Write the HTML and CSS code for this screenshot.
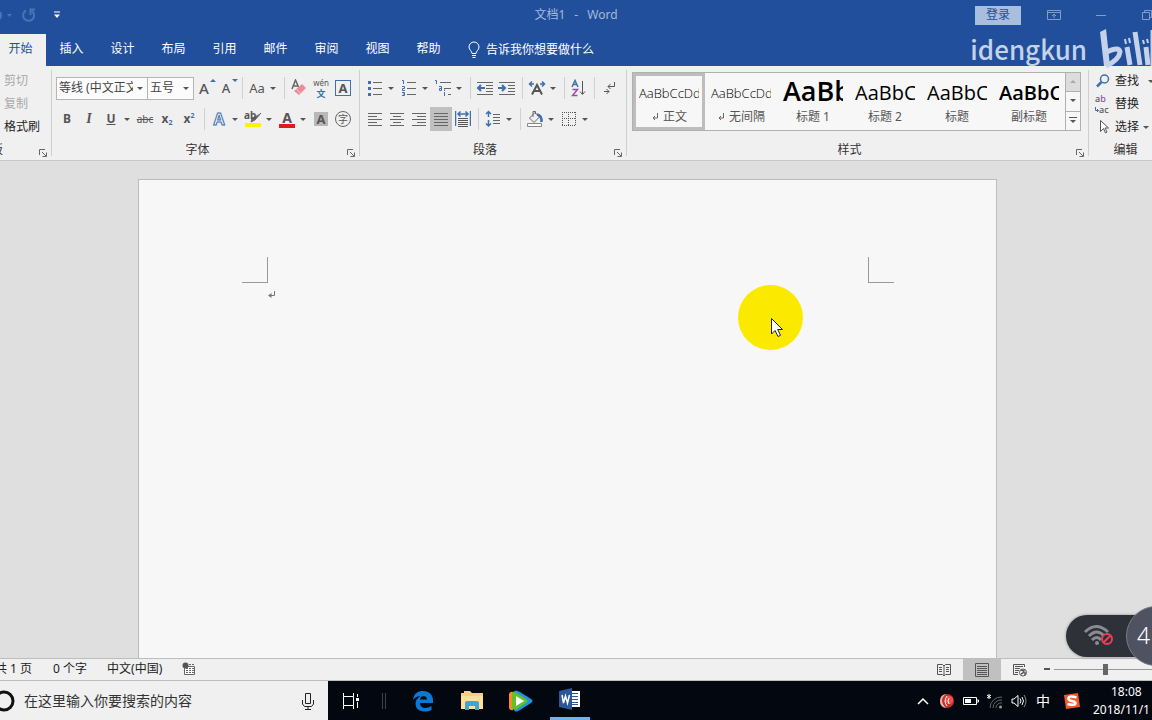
FILE: index.html
```html
<!DOCTYPE html>
<html lang="zh-CN">
<head>
<meta charset="utf-8">
<title>文档1 - Word</title>
<link rel="stylesheet" href="styles.css">
</head>
<body>
<div class="app">
  <header class="titlebar">
    <div class="quick">
      <button class="bare" aria-label="撤消"><svg width="14" height="16" viewBox="0 0 14 16"><path d="M0 5q2 3 0 7" fill="none" stroke="#4a74b8" stroke-width="2"/><path d="M7 7h5l-2.500 3z" fill="#4a74b8"/></svg></button>
      <button class="bare redo" aria-label="重复"><svg width="16" height="16" viewBox="0 0 16 16"><path d="M5 3.500A5.500 5.500 0 1 0 11 4M14 2.500H9.500V8" fill="none" stroke="#4a74b8" stroke-width="2"/></svg></button>
      <button class="bare more" aria-label="自定义快速访问工具栏"><svg width="8" height="8" viewBox="0 0 8 8"><path d="M1 1h6" stroke="#fff"/><path d="M1 3.500h6L4 7z" fill="#fff"/></svg></button>
    </div>
    <h1 class="title"><span>文档1</span><span>-</span><span>Word</span></h1>
    <div class="window-tools">
      <button class="login">登录</button>
      <button class="bare" aria-label="功能区显示选项"><svg width="14" height="12" viewBox="0 0 14 12" fill="none" stroke="#7f9dcd"><path d="M.5 1.500h13v9H.5zM.5 3.500h13M7 9V5M5 7l2-2 2 2"/></svg></button>
      <button class="bare" aria-label="最小化"><svg width="12" height="12" viewBox="0 0 12 12"><path d="M1 6.500h10" stroke="#7f9dcd"/></svg></button>
      <button class="bare" aria-label="向下还原"><svg width="12" height="12" viewBox="0 0 12 12" fill="none" stroke="#7f9dcd"><path d="M1.500 3.500h7v7h-7zM3.500 3.500v-2h7v7h-2"/></svg></button>
    </div>
  </header>

  <nav class="tabs">
    <button class="tab active">开始</button><button class="tab">插入</button><button class="tab">设计</button><button class="tab">布局</button><button class="tab">引用</button><button class="tab">邮件</button><button class="tab">审阅</button><button class="tab">视图</button><button class="tab">帮助</button>
    <button class="tell"><svg width="12" height="18" viewBox="0 0 12 18" fill="none" stroke="#fff"><path d="M4 12.500C4 10 1 9 1 6a5 5 0 0 1 10 0c0 3-3 4-3 6.500zM4 14.500h4M4.500 16.500h3"/></svg>告诉我你想要做什么</button>
  </nav>

  <section class="ribbon">
    <div class="group clipboard">
      <button class="line off">剪切</button>
      <button class="line off">复制</button>
      <button class="line">格式刷</button>
      <div class="caption"><span class="clip-name">剪贴板</span><button class="launcher" aria-label="剪贴板选项"><svg width="8" height="8" viewBox="0 0 8 8"><path d="M.5 6V.5H6M3 3l4 4M7.500 3.500v4h-4" fill="none" stroke="#666"/></svg></button></div>
    </div>

    <div class="group font">
      <div class="row">
        <label class="combo family"><select aria-label="字体"><option>等线 (中文正文)</option></select></label>
        <label class="combo size"><select aria-label="字号"><option>五号</option></select></label>
        <button class="tool" aria-label="增大字号"><span class="letter big">A</span><svg class="mark" width="6" height="16" viewBox="0 0 6 16"><path d="M0 4l3-3 3 3z" fill="#3f6fae"/></svg></button>
        <button class="tool" aria-label="减小字号"><span class="letter">A</span><svg class="mark" width="6" height="16" viewBox="0 0 6 16"><path d="M0 1h6L3 4z" fill="#3f6fae"/></svg></button>
        <i class="sep"></i>
        <button class="tool aa">Aa</button><button class="drop" aria-label="更改大小写"></button>
        <i class="sep"></i>
        <button class="tool" aria-label="清除所有格式"><svg width="18" height="18" viewBox="0 0 18 18"><path d="M2 10L5.500 1l3 7M3.500 7h4" fill="none" stroke="#666" stroke-width="1.500"/><path d="M4 12l8-7 4 4-7 7z" fill="#ea8b98"/><path d="M6.500 10l4.500 5" stroke="#f7c5cb"/></svg></button>
        <button class="tool pinyin" aria-label="拼音指南"><span>wén</span><b>文</b></button>
        <button class="tool" aria-label="字符边框"><span class="boxed">A</span></button>
      </div>
      <div class="row">
        <button class="tool strong">B</button>
        <button class="tool italic">I</button>
        <button class="tool under">U</button><button class="drop" aria-label="下划线样式"></button>
        <button class="tool strike">abc</button>
        <button class="tool script">x<sub>2</sub></button>
        <button class="tool script">x<sup>2</sup></button>
        <i class="sep"></i>
        <button class="tool"><span class="effect">A</span></button><button class="drop" aria-label="文本效果"></button>
        <button class="tool hilite"><span>ab</span><svg width="18" height="18" viewBox="0 0 18 18"><path d="M17 3l-6 7-4 2 1-4" fill="#666" stroke="#666"/><path d="M1 13h16v4H1z" fill="#fff200"/></svg></button><button class="drop" aria-label="突出显示颜色"></button>
        <button class="tool"><span class="color">A</span></button><button class="drop" aria-label="字体颜色"></button>
        <button class="tool"><span class="shade">A</span></button>
        <button class="tool"><span class="ring">字</span></button>
      </div>
      <div class="caption">字体<button class="launcher" aria-label="字体选项"><svg width="8" height="8" viewBox="0 0 8 8"><path d="M.5 6V.5H6M3 3l4 4M7.500 3.500v4h-4" fill="none" stroke="#666"/></svg></button></div>
    </div>

    <div class="group paragraph">
      <div class="row">
        <button class="tool" aria-label="项目符号"><svg width="16" height="16" viewBox="0 0 16 16"><path d="M6 2.500h9M6 8.500h9M6 14.500h9" stroke="#666"/><path d="M1 1h3v3H1zM1 7h3v3H1zM1 13h3v3H1z" fill="#3f6fae"/></svg></button><button class="drop" aria-label="项目符号库"></button>
        <button class="tool" aria-label="编号"><svg width="16" height="16" viewBox="0 0 16 16"><path d="M6 2.500h9M6 8.500h9M6 14.500h9" stroke="#666"/><path d="M1 .5h1.500V4M1 6.500h2.500v2H1.500v2H4M1 12.500h2.500v3H1M2 14h1" fill="none" stroke="#3f6fae"/></svg></button><button class="drop" aria-label="编号库"></button>
        <button class="tool" aria-label="多级列表"><svg width="18" height="16" viewBox="0 0 18 16"><path d="M6 2.500h11M10 8.500h7M14 14.500h3" stroke="#666"/><path d="M1 .5h1.500V4M5 6.500h2.500v4H5.500v-2h2M10.500 12v4M10.500 9.500V11" fill="none" stroke="#3f6fae"/></svg></button><button class="drop" aria-label="多级列表库"></button>
        <i class="sep"></i>
        <button class="tool" aria-label="减少缩进量"><svg width="18" height="16" viewBox="0 0 18 16"><path d="M1 2.500h16M10 5.500h7M10 8.500h7M10 11.500h7M1 14.500h16" stroke="#666"/><path d="M9 8H2M5 5L2 8l3 3" fill="none" stroke="#3f6fae" stroke-width="2"/></svg></button>
        <button class="tool" aria-label="增加缩进量"><svg width="18" height="16" viewBox="0 0 18 16"><path d="M1 2.500h16M10 5.500h7M10 8.500h7M10 11.500h7M1 14.500h16" stroke="#666"/><path d="M0 8h7M4 5l3 3-3 3" fill="none" stroke="#3f6fae" stroke-width="2"/></svg></button>
        <i class="sep"></i>
        <button class="tool" aria-label="中文版式"><svg width="18" height="16" viewBox="0 0 18 16" fill="none"><path d="M4 14.500L9 5l5 9.500M6 11h6" stroke="#555" stroke-width="2"/><path d="M6 4H2M4 1.500L1.500 4 4 6.500M12 4h4M14 1.500L16.500 4 14 6.500" stroke="#3f6fae" stroke-width="1.500"/></svg></button><button class="drop" aria-label="中文版式选项"></button>
        <i class="sep"></i>
        <button class="tool" aria-label="排序"><svg width="16" height="18" viewBox="0 0 16 18" fill="none"><path d="M1 8l3-6.500L7 8M2 5.500h4" stroke="#3f6fae" stroke-width="1.500"/><path d="M1.500 10.500h5l-5 6h5" stroke="#9550a0" stroke-width="1.500"/><path d="M11.500 2v13M9 12.500l2.500 3 2.500-3" stroke="#555"/></svg></button>
        <i class="sep"></i>
        <button class="tool" aria-label="显示编辑标记"><svg width="14" height="14" viewBox="0 0 14 14" fill="none" stroke="#555"><path d="M12.500 1v4.500H6M8.500 3L6 5.500 8.500 8M2 10.500h5M4.500 8L7 10.500 4.500 13"/></svg></button>
      </div>
      <div class="row">
        <button class="tool" aria-label="左对齐"><svg width="16" height="14" viewBox="0 0 16 14"><path d="M1 1.500h14M1 4.500h9M1 7.500h14M1 10.500h9M1 13.500h14" stroke="#666"/></svg></button>
        <button class="tool" aria-label="居中"><svg width="16" height="14" viewBox="0 0 16 14"><path d="M1 1.500h14M4 4.500h8M1 7.500h14M4 10.500h8M1 13.500h14" stroke="#666"/></svg></button>
        <button class="tool" aria-label="右对齐"><svg width="16" height="14" viewBox="0 0 16 14"><path d="M1 1.500h14M6 4.500h9M1 7.500h14M6 10.500h9M1 13.500h14" stroke="#666"/></svg></button>
        <button class="tool pressed" aria-label="两端对齐"><svg width="16" height="14" viewBox="0 0 16 14"><path d="M1 1.500h14M1 4.500h14M1 7.500h14M1 10.500h14M1 13.500h14" stroke="#666"/></svg></button>
        <button class="tool" aria-label="分散对齐"><svg width="16" height="18" viewBox="0 0 16 18" fill="none"><path d="M.5 1v15M15.500 1v15M3 4h10M5.500 1.500L3 4l2.500 2.500M10.500 1.500L13 4l-2.500 2.500" stroke="#3f6fae" stroke-width="1.500"/><path d="M3 8.500h10M3 10.500h10M3 12.500h10M3 14.500h10M3 16.500h10" stroke="#555"/></svg></button>
        <i class="sep"></i>
        <button class="tool" aria-label="行和段落间距"><svg width="16" height="18" viewBox="0 0 16 18" fill="none"><path d="M3.500 1.500v5.500M3.500 10v6M1 4l2.500-2.500L6 4M1 13.500L3.500 16 6 13.500" stroke="#3f6fae" stroke-width="1.500"/><path d="M8 4.500h7M8 7.500h7M8 10.500h7M8 13.500h7" stroke="#666"/></svg></button><button class="drop" aria-label="间距选项"></button>
        <i class="sep"></i>
        <button class="tool" aria-label="底纹"><svg width="18" height="18" viewBox="0 0 18 18" fill="none"><path d="M3.500 8l5.500-5.500L13.500 7 8 12.500zM7 7V1.500h2.500V4" stroke="#666"/><path d="M11 4.500q5 1 4.500 7.500" stroke="#3f6fae" stroke-width="2.500"/><path d="M1.500 13.500h14v3h-14z" stroke="#888" fill="#fff"/></svg></button><button class="drop" aria-label="底纹颜色"></button>
        <button class="tool" aria-label="边框"><svg width="14" height="14" viewBox="0 0 14 14"><path d="M0 .5h14M0 6.500h14M0 13.500h14M.5 0v14M6.500 0v14M13.500 0v14" fill="none" stroke="#555" stroke-dasharray="1 1"/></svg></button><button class="drop" aria-label="边框选项"></button>
      </div>
      <div class="caption">段落<button class="launcher" aria-label="段落设置"><svg width="8" height="8" viewBox="0 0 8 8"><path d="M.5 6V.5H6M3 3l4 4M7.500 3.500v4h-4" fill="none" stroke="#666"/></svg></button></div>
    </div>

    <div class="group styles">
      <div class="gallery">
        <button class="style selected"><span class="sample">AaBbCcDd</span><span class="name"><svg width="8" height="9" viewBox="0 0 8 9"><path d="M6.500 0v5H2M4 3L2 5l2 2" fill="none" stroke="#666"/></svg> 正文</span></button>
        <button class="style"><span class="sample">AaBbCcDd</span><span class="name"><svg width="8" height="9" viewBox="0 0 8 9"><path d="M6.500 0v5H2M4 3L2 5l2 2" fill="none" stroke="#666"/></svg> 无间隔</span></button>
        <button class="style"><span class="sample h1">AaBb</span><span class="name">标题 1</span></button>
        <button class="style"><span class="sample h2">AaBbC</span><span class="name">标题 2</span></button>
        <button class="style"><span class="sample h2">AaBbC</span><span class="name">标题</span></button>
        <button class="style"><span class="sample sub">AaBbC</span><span class="name">副标题</span></button>
        <div class="scroller">
          <button class="dim" aria-label="上一行"><svg width="6" height="6" viewBox="0 0 6 6"><path d="M0 4l3-3 3 3z" fill="#aaa"/></svg></button>
          <button aria-label="下一行"><svg width="6" height="6" viewBox="0 0 6 6"><path d="M0 1h6L3 4z" fill="#555"/></svg></button>
          <button aria-label="其他"><svg width="8" height="8" viewBox="0 0 8 8"><path d="M0 .5h8" stroke="#555"/><path d="M1 3h6L4 6z" fill="#555"/></svg></button>
        </div>
      </div>
      <div class="caption">样式<button class="launcher" aria-label="样式窗格"><svg width="8" height="8" viewBox="0 0 8 8"><path d="M.5 6V.5H6M3 3l4 4M7.500 3.500v4h-4" fill="none" stroke="#666"/></svg></button></div>
    </div>

    <div class="group editing">
      <button class="line find"><svg width="16" height="16" viewBox="0 0 16 16" fill="none" stroke="#3f6fae"><circle cx="9.500" cy="6" r="4" stroke-width="1.500"/><path d="M6.500 9L2 13.500" stroke-width="2.500"/></svg>查找<i class="caret"></i></button>
      <button class="line"><span class="swap"><b>a<em>b</em></b><b class="to"><svg width="4" height="5" viewBox="0 0 4 5"><path d="M.5 0v3.500H4M2.500 2v3" fill="none" stroke="#3f6fae"/></svg>ac</b></span>替换</button>
      <button class="line"><svg width="16" height="16" viewBox="0 0 16 16" fill="#fff" stroke="#555"><path d="M5.500 1.500v11l3-3 2 4.500 1.500-1-2-4h3.500z"/></svg>选择<i class="caret"></i></button>
      <div class="caption">编辑</div>
    </div>
  </section>

  <main class="workspace">
    <article class="page">
      <div class="margins"><i class="corner left"></i><i class="corner right"></i></div>
      <p class="paragraph-line"><svg width="8" height="9" viewBox="0 0 8 9"><path d="M6.500 0v4.500H1" fill="none" stroke="#777"/><path d="M0 4.500L3.500 2v5z" fill="#777"/></svg></p>
    </article>
    <div class="spotlight"><svg width="14" height="21" viewBox="0 0 14 21"><path d="M1.500 1.500v15.500l3.500-3.500 3 6 2.500-1.200-2.800-5.800h4.800z" fill="#fff" stroke="#222"/></svg></div>
  </main>

  <footer class="status">
    <span class="pages">共 1 页</span>
    <span class="words">0 个字</span>
    <span class="lang">中文(中国)</span>
    <svg width="14" height="14" viewBox="0 0 14 14"><path d="M2.500 4.500h10v8h-10z" fill="#fff" stroke="#666"/><path d="M7 2.500h6M4 6.500h8M4 8.500h8M4 10.500h8" stroke="#666" stroke-dasharray="2 1"/><circle cx="3.500" cy="3.500" r="3" fill="#555"/></svg>
    <div class="views">
      <button aria-label="阅读视图"><svg width="14" height="14" viewBox="0 0 14 14" fill="none" stroke="#555"><path d="M.5 1.500h5L7 3l1.500-1.500h5v10h-5L7 13l-1.500-1.500h-5zM7 3v10M2 4.500h3M2 6.500h3M2 8.500h3M9 4.500h3M9 6.500h3M9 8.500h3"/></svg></button>
      <button class="current" aria-label="页面视图"><svg width="14" height="14" viewBox="0 0 14 14" fill="none" stroke="#555"><path d="M.5.5h13v13H.5zM2 3.500h10M2 5.500h10M2 7.500h10M2 9.500h10M2 11.500h10"/></svg></button>
      <button aria-label="Web 版式"><svg width="14" height="14" viewBox="0 0 14 14" fill="none" stroke="#555"><path d="M11.500 4V1.500H.5v10H5M2 3.500h8M2 5.500h5M2 7.500h4M2 9.500h3"/><circle cx="10" cy="9.500" r="3.500" fill="#fff"/><path d="M8 7l3 1-1 2-2 1M12 9v3" stroke-width="1.500"/></svg></button>
    </div>
    <button class="minus" aria-label="缩小"><svg width="6" height="2"><path d="M0 1h6" stroke="#555" stroke-width="2"/></svg></button>
    <input class="zoom" type="range" aria-label="显示比例" min="0" max="100" value="50">
  </footer>

  <footer class="taskbar">
    <label class="search">
      <svg width="16" height="24" viewBox="0 0 16 24"><circle cx="4" cy="12" r="9" fill="none" stroke="#111" stroke-width="3"/></svg>
      <input type="text" aria-label="搜索" placeholder="在这里输入你要搜索的内容">
      <svg width="12" height="18" viewBox="0 0 12 18" fill="none" stroke="#222"><path d="M3.500 1.500h5v10h-5zM.5 8v4l2 2.500h7l2-2.500V8M6 14.500v3M3 17.500h6"/></svg>
    </label>
    <div class="launch">
      <button class="view" aria-label="任务视图"><svg width="18" height="16" viewBox="0 0 18 16" fill="none" stroke="#fff"><path d="M1.500 0v3.500h10V0M1.500 16v-3.500h10V16M1.500 3.500v9M11.500 3.500v9M15.500 1v3M15.500 9v6"/><path d="M14 5h3v3h-3z" fill="#fff" stroke="none"/></svg></button>
      <svg class="grip" width="6" height="18" viewBox="0 0 6 18"><path d="M1.500 1v16M4.500 1v16" stroke="#3d4148"/></svg>
      <button aria-label="Edge"><svg width="22" height="22" viewBox="0 0 22 22"><path d="M1 10C2 3 6 1 11 1c6 0 10 4 10 9v3H8c0 6 7 6 11.500 3v4C13 23 4 22 3.500 14 3.500 10 6 7.500 9 6 5 6 2.500 8 1 10zM8 9.500h7C15 5 9 4.500 8 9.500z" fill="#0a78d7"/></svg></button>
      <button aria-label="文件资源管理器"><svg width="22" height="20" viewBox="0 0 22 20"><path d="M0 2h3V0h6l2 2h11v16H0z" fill="#f5d27a"/><path d="M0 5h22v13H0z" fill="#fde09a"/><path d="M4 19v-7q0-2 2-2h10q2 0 2 2v7h-4v-4H8v4z" fill="#3aa6dd"/></svg></button>
      <button aria-label="播放器"><svg width="24" height="22" viewBox="0 0 24 22"><path d="M0 4q1-3 4-2v18q-3 1-4-2z" fill="#ff8a1c"/><path d="M5 2q1-3 6 0l11 7q3 2 0 4l-11 7q-5 3-6 0z" fill="#1e93e4"/><path d="M3 3q1-3 5 0l9 6q3 2 0 4l-9 6q-4 2-5-1z" fill="#62c02a"/><path d="M7 6l8 5-8 5z" fill="#fff"/></svg></button>
      <button class="running" aria-label="Word"><svg width="22" height="22" viewBox="0 0 22 22"><path d="M11 3h10v16H11z" fill="#fff"/><path d="M12 5.500h7M12 8.500h7M12 11.500h7M12 14.500h7M12 16.500h7" stroke="#2b579a"/><path d="M0 3l13-3v22L0 19z" fill="#2b579a"/><path d="M3 7l1.500 8L6.500 8l2 7L10.500 7" fill="none" stroke="#fff" stroke-width="1.500"/></svg></button>
    </div>
    <div class="tray">
      <button aria-label="显示隐藏的图标"><svg width="12" height="8" viewBox="0 0 12 8"><path d="M1 7l5-5 5 5" fill="none" stroke="#fff" stroke-width="1.500"/></svg></button>
      <button aria-label="录制"><svg width="16" height="16" viewBox="0 0 16 16"><circle cx="8" cy="8" r="7" fill="#c9302c"/><path d="M7 1q-8 6 0 14-6-1-6-7t6-7z" fill="#e9b3a8"/><circle cx="10" cy="7" r="4" fill="#f0504a"/><path d="M8 3q-4 5 0 10M10 5q-2 3 0 6" fill="none" stroke="#fff"/></svg></button>
      <button aria-label="电池"><svg width="16" height="10" viewBox="0 0 16 10"><path d="M.5 1.500h13v7H.5zM14 4h1.500v2H14" fill="none" stroke="#fff"/><path d="M2 3h6v4H2z" fill="#fff"/></svg></button>
      <button aria-label="网络"><svg width="18" height="16" viewBox="0 0 18 16" fill="none"><path d="M3 1v5M1 2l4 3M5 2L1 5" stroke="#fff"/><path d="M4 15A11 11 0 0 1 16 4M7 15a8 8 0 0 1 9-8M10 15a5 5 0 0 1 6-5" stroke="#666"/><circle cx="14.500" cy="14" r="1.500" fill="#999"/></svg></button>
      <button aria-label="音量"><svg width="16" height="14" viewBox="0 0 16 14" fill="none" stroke="#fff"><path d="M1 5h2l4-3.500v11L3 9H1zM9 4.500q2 2.500 0 5M11 3q3 4 0 8"/><path d="M13 1q4 6 0 12" stroke="#888"/></svg></button>
      <button class="ime">中</button>
      <button class="wide" aria-label="搜狗输入法"><svg width="16" height="16" viewBox="0 0 16 16"><path d="M0 2l14-2 2 14-14 2z" fill="#f15a24"/><path d="M12.500 4.500Q4 2 4.500 6q.5 1.500 3.500 2t3.500 2q0 3-8 1" fill="none" stroke="#fff" stroke-width="2.500"/></svg></button>
      <time class="clock"><span class="hour">18:08</span><span>2018/11/1</span></time>
    </div>
  </footer>

  <div class="watermark"><span>idengkun</span><svg width="52" height="42" viewBox="0 0 52 42" fill="none" stroke="#c4d2ea"><path d="M0 4l6-3 4 37H4z" fill="#c4d2ea" stroke="none"/><path d="M7 24q12-6 13 0-1 8-14 14" stroke-width="5"/><path d="M27 19l3 18M35 4l5 33M46 19l2 18" stroke-width="5"/><path d="M25 11l1 5M29 10l1 5M43 12l1 4M47 11l1 4" stroke-width="2"/><path d="M53 2v36" stroke-width="5"/></svg></div>
  <div class="monitor">
    <svg width="32" height="24" viewBox="0 0 32 24" fill="none"><path d="M2 8q11-11 23 0M6 12q8-8 15 0M9 16q5-5 9 0" stroke="#8a8c91" stroke-width="3"/><circle cx="14" cy="19" r="2" fill="#8a8c91"/><circle cx="24" cy="15" r="5" fill="#2f3138" stroke="#e8405a" stroke-width="2"/><path d="M20.500 18.500l7-7" stroke="#e8405a" stroke-width="2"/></svg>
    <span class="meter">4</span>
  </div>
</div>
</body>
</html>
```

FILE: styles.css
```css
* { box-sizing: border-box; }
body {
  margin: 0;
  overflow: hidden;
  font: 12px/16px "Noto Sans", "Noto Sans CJK SC", sans-serif;
  color: #222;
}
button, input, select { font: inherit; color: inherit; }
button { border: 0; padding: 0; background: none; white-space: nowrap; }
svg { display: block; flex: none; }
.app { position: relative; display: flex; flex-direction: column; height: 100vh; overflow: hidden; }

/* title bar */
.titlebar {
  display: grid;
  grid-template-columns: 1fr auto 1fr;
  align-items: center;
  height: 34px;
  padding-bottom: 4px;
  background: #224f9c;
}
.quick { display: flex; align-items: center; }
.redo { margin-left: 7px; }
.more { margin-left: 16px; }
.title { display: flex; gap: 9px; margin: 0; font-size: 12px; font-weight: 400; color: #a5b9dc; }
.window-tools { display: flex; align-items: center; justify-content: flex-end; overflow: hidden; margin-right: -1px; }
.login { width: 46px; height: 19px; margin-right: 26px; background: #a9bddd; color: #224f9c; }
.window-tools .bare + .bare { margin-left: 34px; }

/* tabs */
.tabs { display: flex; height: 32px; margin-left: -5px; background: #224f9c; }
.tab { width: 51px; height: 32px; padding-bottom: 3px; color: #fff; }
.tab.active { background: #f0f0f0; color: #224f9c; }
.tell { display: flex; align-items: center; gap: 6px; margin-left: 14px; padding-bottom: 1px; color: #fff; }

/* ribbon */
.ribbon { display: flex; flex: none; height: 95px; padding: 4px 0; background: #f0f0f0; border-bottom: 1px solid #c8c8c8; }
.group { display: flex; flex-direction: column; flex: none; padding-left: 4px; border-right: 1px solid #cfcfcf; }
.clipboard { width: 52px; }
.font { width: 308px; padding-top: 6px; }
.paragraph { width: 267px; padding-top: 6px; }
.styles { flex: 1; padding-top: 2px; }
.editing { width: 63px; border: 0; padding-left: 6px; }
.row { display: flex; height: 24px; margin-bottom: 7px; align-items: center; }
.line { display: flex; align-items: center; gap: 4px; height: 22px; flex: none; }
.line + .line { margin-top: 1px; }
.off { color: #aaa; }
.caption { position: relative; display: flex; flex: none; justify-content: center; height: 16px; margin-top: auto; margin-bottom: -2px; padding-right: 20px; color: #333; }
.clipboard .caption { justify-content: flex-start; }
.clip-name { display: flex; justify-content: flex-end; width: 7px; margin-left: -4px; padding-right: 4px; overflow: hidden; white-space: nowrap; }
.editing .caption { padding-right: 0; padding-left: 4px; }
.launcher { position: absolute; right: 4px; bottom: 1px; }

.tool { display: flex; align-items: center; justify-content: center; position: relative; width: 22px; height: 24px; flex: none; color: #555; }
.drop { width: 12px; height: 24px; flex: none; padding-left: 2px; }
.drop::before, .caret, .combo::after {
  content: "";
  display: block;
  width: 0;
  height: 0;
  border: 3px solid transparent;
  border-top-color: #555;
  border-bottom: 0;
}
.sep { width: 8px; height: 22px; flex: none; background: linear-gradient(#d0d0d0, #d0d0d0) center / 1px 100% no-repeat; }
.pressed { background: #c0c0c0; }

.combo { display: flex; align-items: center; height: 23px; border: 1px solid #b5b5b5; background: #fcfcfc; }
.combo select { flex: 1; width: 0; height: 20px; border: 0; padding: 0 0 0 2px; background: none; appearance: none; overflow: hidden; text-overflow: clip; color: #444; }
.combo::after { margin: 0 4px; }
.family { width: 92px; margin-right: -1px; }
.size { width: 47px; }

.letter { font-size: 13px; font-weight: 500; padding-right: 2px; }
.letter.big { font-size: 15px; }
.mark { position: absolute; right: 0; top: 2px; }
.aa { font-size: 13px; }
.pinyin { flex-direction: column; font-size: 8px; line-height: 10px; }
.pinyin b { font-size: 9px; color: #2f75a8; line-height: 11px; }
.boxed { width: 16px; height: 16px; border: 1px solid #3f6fae; font-weight: 700; font-size: 13px; line-height: 14px; }
.strong { font-weight: 700; }
.italic { font: italic 700 14px/16px "Liberation Serif", serif; }
.under { font-weight: 700; text-decoration: underline; }
.strike { font-size: 10px; text-decoration: line-through; }
.script { font-weight: 700; }
.script sub, .script sup { font-size: 7px; line-height: 7px; color: #3f6fae; }
.script sub { align-self: flex-end; margin-bottom: 5px; }
.script sup { align-self: flex-start; margin-top: 5px; }
.effect { font-size: 16px; font-weight: 700; color: #f0f5fc; -webkit-text-stroke: 1px #3f6fae; }
.hilite span { position: absolute; left: 2px; top: 2px; font-size: 10px; font-weight: 700; line-height: 12px; }
.color { width: 16px; border-bottom: 4px solid #e01b1b; font-size: 14px; font-weight: 700; line-height: 13px; }
.shade { width: 14px; background: #b8b8b8; font-size: 13px; font-weight: 700; line-height: 14px; }
.ring { width: 16px; height: 16px; border: 1px solid #666; border-radius: 50%; font-size: 10px; line-height: 14px; }

/* style gallery */
.gallery { display: flex; height: 59px; margin: 0 7px 0 1px; border: 1px solid #b0b0b0; background: #f7f7f7; }
.style { display: flex; flex-direction: column; width: 72px; padding: 4px 6px; border: 0; color: #555; }
.style.selected { padding: 1px 3px; border: 3px solid #bdbdbd; }
.sample { width: 60px; height: 32px; overflow: hidden; font: 300 13px/32px "Open Sans", sans-serif; text-align: left; color: #000; }
.sample.h1 { font-size: 27px; font-weight: 600; line-height: 28px; }
.sample.h2 { font-size: 20px; font-weight: 400; }
.sample.sub { font-size: 20px; font-weight: 600; }
.name { display: flex; align-items: center; justify-content: center; gap: 4px; width: 60px; }
.scroller { display: flex; flex-direction: column; flex: 1; border-left: 1px solid #b0b0b0; }
.scroller button { display: flex; align-items: center; justify-content: center; flex: 1; border-top: 1px solid #b0b0b0; }
.scroller .dim { border-top: 0; background: #dcdcdc; }
.caret { flex: none; }
.find .caret { margin-left: 5px; }
.swap { display: flex; flex-direction: column; width: 16px; font-size: 9px; line-height: 11px; text-align: left; color: #555; }
.swap b { font-weight: 500; }
.swap .to { display: flex; align-items: center; }
.swap em { font-style: normal; color: #9550a0; }

/* document */
.workspace { position: relative; flex: 1; min-height: 0; padding: 18px 155px 0 138px; background: #dfdfdf; overflow: hidden; }
.page { height: 100%; padding: 77px 102px 0 103px; background: #f7f7f7; border: 1px solid #bcbcbc; border-bottom: 0; }
.margins { display: flex; justify-content: space-between; }
.corner { width: 26px; height: 26px; border-bottom: 1px solid #999; }
.corner.left { border-right: 1px solid #999; }
.corner.right { border-left: 1px solid #999; }
.paragraph-line { margin: 8px 0 0 26px; }
.spotlight { position: absolute; left: 738px; top: 124px; display: grid; width: 65px; height: 65px; border-radius: 50%; background: #fce900; }
.spotlight svg { margin: 32px 0 0 32px; }

/* status bar */
.status { display: flex; align-items: center; flex: none; height: 23px; padding-bottom: 1px; background: #f0f0f0; border-top: 1px solid #bdbdbd; border-bottom: 1px solid #bdbdbd; overflow: hidden; white-space: nowrap; }
.pages { margin-left: -5px; }
.words { margin-left: 21px; }
.lang { margin: 0 20px 0 20px; }
.views { display: flex; align-self: stretch; margin: 0 0 -1px auto; }
.views button { display: flex; align-items: center; justify-content: center; width: 38px; }
.current { background: #c0c0c0; }
.minus { margin: 0 4px 0 5px; }
.zoom { appearance: none; flex: none; width: 102px; height: 16px; margin: 0 -4px 0 0; background: linear-gradient(#999, #999) center / 100% 1px no-repeat; }
.zoom::-webkit-slider-thumb { appearance: none; width: 5px; height: 11px; background: #666; }

/* taskbar */
.taskbar { display: flex; flex: none; height: 39px; background: #030710; color: #fff; }
.search { display: flex; align-items: center; width: 328px; padding-right: 14px; background: #f0f0f0; color: #222; }
.search input { flex: 1; min-width: 0; padding: 0 0 0 8px; border: 0; background: none; font-size: 14px; }
.search input::placeholder { color: #333; }
.launch { display: flex; align-items: center; }
.launch button { display: flex; align-items: center; justify-content: center; width: 40px; height: 39px; margin-right: 9px; }
.launch .view { width: 46px; margin-right: 7px; }
.launch .grip { margin-right: 16px; }
.launch .running { border-bottom: 3px solid #76b0e8; }
.tray { display: flex; align-items: center; margin-left: auto; }
.tray button { display: flex; align-items: center; justify-content: center; width: 24px; }
.tray .ime { font-size: 14px; }
.tray .wide { width: 34px; }
.clock { display: flex; flex-direction: column; width: 59px; margin-left: 4px; line-height: 18px; white-space: nowrap; }
.hour { padding-left: 18px; }

/* overlays */
.watermark { position: absolute; top: 25px; right: 0; display: flex; align-items: center; gap: 13px; font-size: 25px; font-weight: 600; line-height: 48px; color: #c4d2ea; }
.watermark span { font-family: "Noto Sans CJK SC", sans-serif; font-weight: 500; font-size: 26px; }
.monitor { position: absolute; right: -34px; top: 606px; display: flex; align-items: center; width: 120px; height: 60px; padding-left: 17px; }
.monitor::before { content: ""; position: absolute; left: 0; right: 0; top: 9px; height: 42px; border-radius: 21px; background: #2f3138; box-shadow: 0 0 3px #888; }
.monitor svg { position: relative; }
.meter { position: absolute; right: 0; width: 60px; height: 60px; padding-left: 10px; border: 1px solid #777b88; border-radius: 50%; background: #4e5261; color: #fff; font-size: 23px; font-weight: 300; line-height: 57px; }
```
